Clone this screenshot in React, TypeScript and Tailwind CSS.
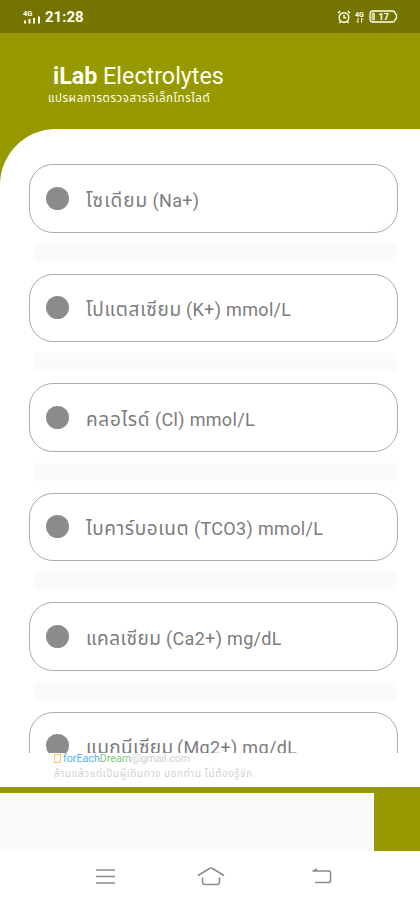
import React from 'react';

interface TestItem {
  thai: string;
  latin: string;
  thaiClass: string;
}

const TESTS: TestItem[] = [
  { thai: 'โซเดียม', latin: '(Na+)', thaiClass: 'w-[66.5px] tracking-[1px]' },
  { thai: 'โปแตสเซียม', latin: '(K+) mmol/L', thaiClass: 'w-[100px] tracking-[0.7px]' },
  { thai: 'คลอไรด์', latin: '(Cl) mmol/L', thaiClass: 'w-[69px] tracking-[0.7px]' },
  { thai: 'ไบคาร์บอเนต', latin: '(TCO3) mmol/L', thaiClass: 'w-[108px] tracking-[0.6px]' },
  { thai: 'แคลเซียม', latin: '(Ca2+) mg/dL', thaiClass: 'w-[80px] tracking-[0.5px]' },
  { thai: 'แมกนีเซียม', latin: '(Mg2+) mg/dL', thaiClass: 'w-[91px] tracking-[0.4px]' },
];

const StatusBar: React.FC = () => (
  <div className="flex h-[33px] shrink-0 items-center justify-between bg-[#767400] pl-[23px] pr-[22px] text-[#fffff0]">
    <div className="flex items-center gap-[4px] pt-[2px]">
      <svg width="18" height="15" viewBox="0 0 18 15" fill="currentColor">
        <text x="0" y="5.5" fontSize="7.5" fontWeight="700" fontFamily="Roboto, sans-serif">4G</text>
        <rect x="1" y="10.5" width="2" height="3" />
        <rect x="5.5" y="9" width="2" height="4.5" />
        <rect x="10" y="8" width="2" height="5.5" />
        <rect x="15" y="6.5" width="2" height="7" />
      </svg>
      <span className="text-[15px] font-bold leading-none">21:28</span>
    </div>
    <div className="flex items-center gap-[4px]">
      <svg width="14" height="14" viewBox="0 0 14 14" fill="none" stroke="currentColor" strokeWidth="1.4">
        <circle cx="7" cy="7.5" r="4.8" />
        <path d="M7 4.8v3h2.3M1 3.2 3.2 1M13 3.2 10.8 1M3.6 11.5 2.3 13M10.4 11.5l1.3 1.5" />
      </svg>
      <svg width="10" height="14" viewBox="0 0 10 14" fill="currentColor">
        <text x="0" y="6.5" fontSize="7" fontWeight="700" fontFamily="Roboto, sans-serif">4G</text>
        <path d="M3 8v4.5M1.5 11 3 12.7M6.5 12.7V8.2L8 9.8" fill="none" stroke="currentColor" />
      </svg>
      <svg width="29" height="13" viewBox="0 0 29 13" fill="currentColor">
        <path d="M4 1h20q1.500 0 2 2l1.500 2v3L26 10q-.5 2-2 2H4Q1 12 1 9V4q0-3 3-3z" fill="none" stroke="currentColor" strokeWidth="1.3" />
        <rect x="2.5" y="2.5" width="3.5" height="8" rx="1" opacity="0.7" />
        <text x="9.5" y="9.8" fontSize="9" fontWeight="700" fontFamily="Roboto, sans-serif">17</text>
      </svg>
    </div>
  </div>
);

const TestCard: React.FC<{ item: TestItem }> = ({ item }) => (
  <div className="h-[109.5px] shrink-0">
    <div className="flex h-[68.5px] items-center rounded-[24px] border border-[#acacac] bg-white pl-4">
      <span className="size-[23px] shrink-0 rounded-full bg-[#8b8b8b]" />
      <p className="ml-[17px] flex items-baseline whitespace-nowrap pt-[5px] text-[18px] leading-6 text-[#7c7c7c]">
        <span className={`shrink-0 text-[19px] ${item.thaiClass}`}>{item.thai}</span>
        <span className="tracking-[0.33px]">{item.latin}</span>
      </p>
    </div>
    <div className="ml-[5px] mr-[2px] mt-[11px] h-[18px] bg-[#fafafa] blur-[1px]" />
  </div>
);

const NavBar: React.FC = () => (
  <nav className="flex h-[49px] shrink-0 items-center gap-[81px] bg-white pl-[95px] text-[#8b8b8b]">
    <svg width="21" height="18" viewBox="0 0 21 18" fill="none" stroke="currentColor" strokeWidth="1.5">
      <path d="M1 3h19M1 9.500h19M1 16h19" />
    </svg>
    <svg width="28" height="20" viewBox="0 0 28 20" fill="none" stroke="currentColor" strokeWidth="1.5">
      <path d="M1 9.500 12.500 2.500q1.500-1 3 0L27 9.500M5.500 11.500v4Q5.500 18.500 8 18.500h12q2.500 0 2.500-3v-4" />
    </svg>
    <svg className="ml-[5px]" width="22" height="18" viewBox="0 0 22 18" fill="none" stroke="currentColor" strokeWidth="1.5">
      <path d="M1.500 4H18q1.500 0 1.500 1.500V14q0 1.500-1.500 1.500H4" />
      <path d="M1 4 6 1v3z" fill="currentColor" stroke="none" />
    </svg>
  </nav>
);

const App: React.FC = () => (
  <div className="flex h-[900px] w-[420px] flex-col overflow-hidden bg-[#979900] font-[Roboto,'Noto_Sans_Thai','Noto_Sans',sans-serif]">
    <StatusBar />
    <header className="h-[96px] shrink-0 pl-[48px] pt-[31px] text-[#fffff0]">
      <h1 className="whitespace-nowrap pl-[5px] text-[23.3px] leading-[25px]">
        <span className="font-bold">iLab</span> Electrolytes
      </h1>
      <p className="whitespace-nowrap text-[11.5px] leading-[19px] tracking-[0.55px]">แปรผลการตรวจสารอิเล็กโทรไลต์</p>
    </header>

    <main className="flex h-[658px] shrink-0 flex-col rounded-tl-[56px] bg-white pl-[29px] pr-[22px] pt-[35px]">
      <div className="flex h-[588.5px] shrink-0 flex-col overflow-hidden">
        {TESTS.map(item => (
          <TestCard key={item.thai} item={item} />
        ))}
      </div>
      <footer className="whitespace-nowrap pl-[25px] text-[#d0d0d0]">
        <p className="flex items-center text-[10.7px] leading-[12px]">
          <span className="mr-[2px] h-[9px] w-[7px] border border-[#ffc45a]" />
          <span className="text-[#54b4e8]">forEach</span>
          <span className="text-[#80ca80]">Dream</span>
          <span className="tracking-[-0.1px]">@gmail.com</span>
        </p>
        <p className="text-[10px] leading-[17px] tracking-[0.6px]">ล้านแล้วแต่เป็นผู้เดินทาง บอกท่าน ไม่ต้องรู้จัก</p>
      </footer>
    </main>

    <div className="flex h-[64px] shrink-0 items-end pr-[46px]">
      <div className="h-[58px] flex-1 bg-[#fafafa]" />
    </div>
    <NavBar />
  </div>
);

export default App;
